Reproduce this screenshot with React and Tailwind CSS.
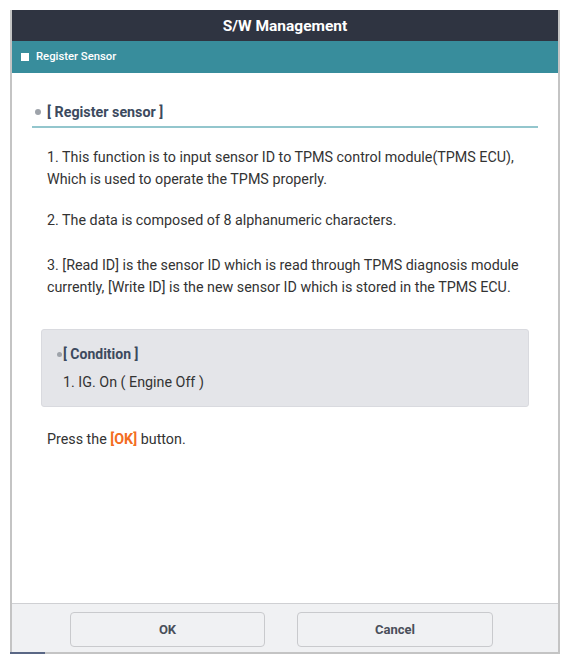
import React from 'react';

const font = { fontFamily: 'Roboto, "Noto Sans", sans-serif' };

function Paragraph({ children, className = '' }) {
  return <p className={`pl-[15px] text-[14.3px] leading-[22px] text-[#333333] ${className}`}>{children}</p>;
}

export default function App() {
  return (
    <div className="w-[570px] h-[662px] bg-white pt-[10px] pl-[10px]" style={font}>
      <div className="w-[550px] h-[642px] flex flex-col border-x-2 border-[#c4c4c4] bg-white">
        {/* title bar */}
        <div className="h-[31px] bg-[#2f3441] flex items-center justify-center pt-[2px]">
          <span className="text-white text-[15.5px] font-bold">S/W Management</span>
        </div>

        {/* sub header */}
        <div className="h-[32px] bg-[#388d9c] flex items-center pl-[9px] gap-[7px]">
          <span className="w-[8px] h-[8px] bg-white" />
          <span className="text-white text-[11.3px] font-medium">Register Sensor</span>
        </div>

        {/* body */}
        <div className="flex-1 px-[20px] pt-[30px]">
          <div className="flex items-center gap-[6px] pl-[3px] pb-[5px] border-b-2 border-[#93c6cd]">
            <span className="w-[6px] h-[6px] rounded-full bg-[#9ea3aa]" />
            <span className="text-[14.3px] font-bold text-[#3c4a5e] leading-[18px]">[ Register sensor ]</span>
          </div>

          <Paragraph className="mt-[18px]">
            1. This function is to input sensor ID to TPMS control module(TPMS ECU),<br />
            Which is used to operate the TPMS properly.
          </Paragraph>
          <Paragraph className="mt-[19px]">2. The data is composed of 8 alphanumeric characters.</Paragraph>
          <Paragraph className="mt-[23px]">
            3. [Read ID] is the sensor ID which is read through TPMS diagnosis module<br />
            currently, [Write ID] is the new sensor ID which is stored in the TPMS ECU.
          </Paragraph>

          {/* condition box */}
          <div className="mt-[31px] ml-[9px] mr-[9px] h-[78px] bg-[#e4e5e9] border border-[#d9dadf] rounded-[3px] px-[15px] pt-[15px]">
            <div className="flex items-center gap-[1px]">
              <span className="w-[5px] h-[5px] rounded-full bg-[#9ea3aa]" />
              <span className="text-[14px] font-bold text-[#3c4a5e] leading-[18px]">[ Condition ]</span>
            </div>
            <p className="mt-[10px] pl-[6px] text-[14.3px] leading-[18px] text-[#333333]">1. IG. On ( Engine Off )</p>
          </div>

          <Paragraph className="mt-[21px]">
            Press the <span className="font-bold text-[#f36d21]">[OK]</span> button.
          </Paragraph>
        </div>

        {/* footer */}
        <div className="h-[49px] bg-[#f0f1f3] border-t border-[#cfd0d3] flex items-center justify-center gap-[32px] pr-[7px] pt-[3px]">
          <button className="w-[195px] h-[35px] rounded-[4px] border border-[#c9cacd] bg-[#f0f1f3] text-[13px] font-bold text-[#4a4f5a]">
            OK
          </button>
          <button className="w-[196px] h-[35px] rounded-[4px] border border-[#c9cacd] bg-[#f0f1f3] text-[13px] font-bold text-[#4a4f5a]">
            Cancel
          </button>
        </div>
      </div>
      {/* bottom edge with the short dark tab on the left */}
      <div className="w-[550px] h-[2px] bg-[#c4c4c4] flex">
        <div className="w-[35px] h-[2px] bg-[#5a6785]" />
      </div>
    </div>
  );
}
